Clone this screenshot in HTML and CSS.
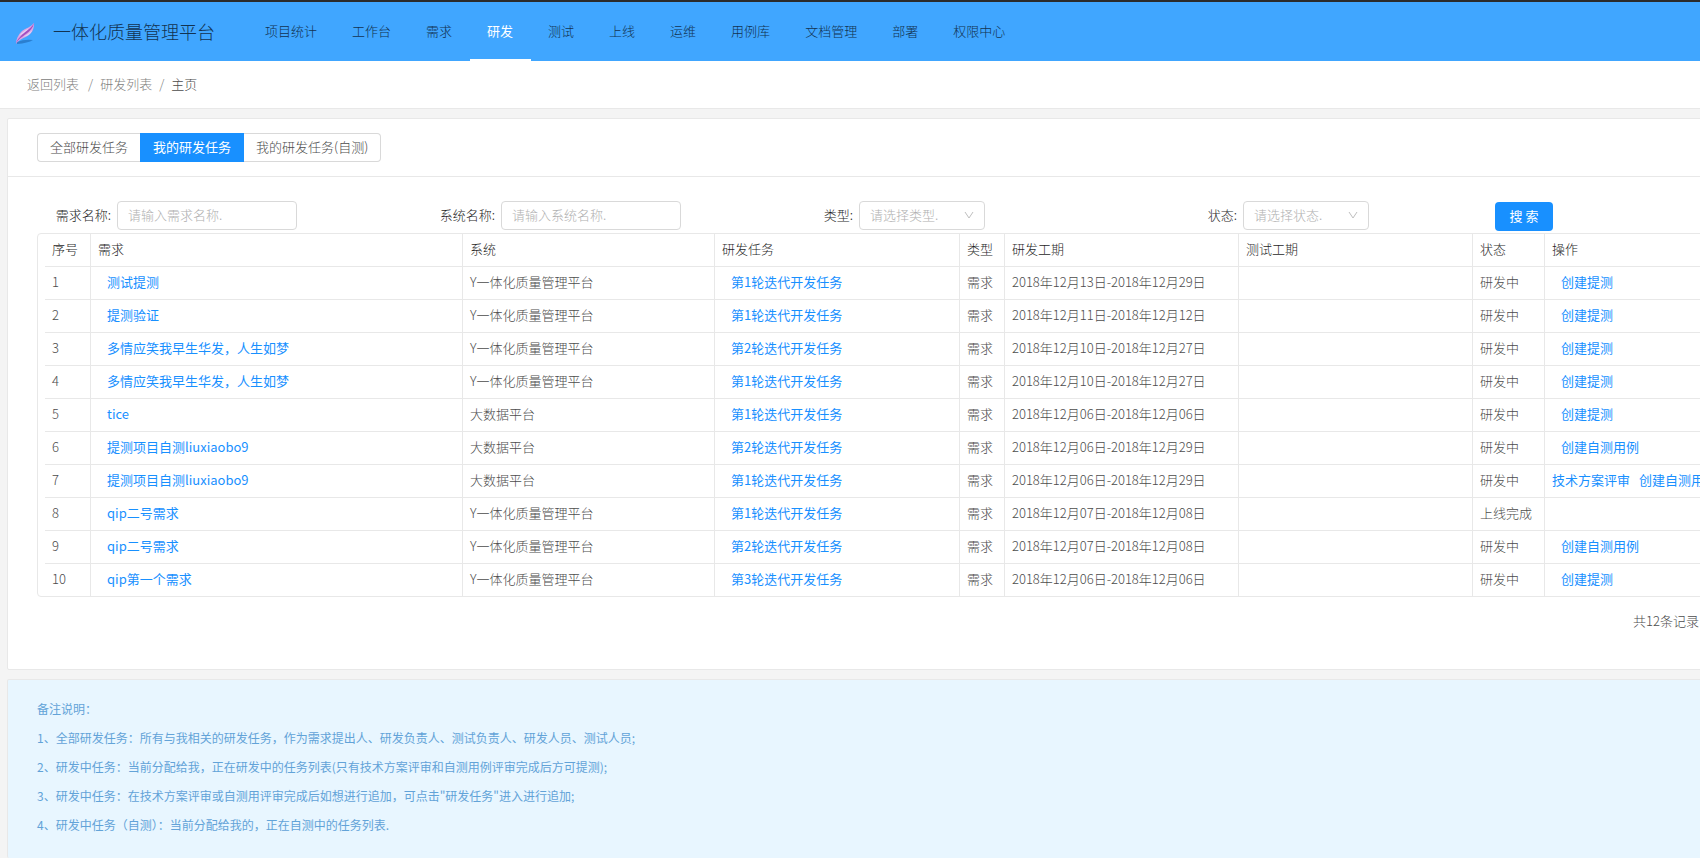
FILE: index.html
```html
<!DOCTYPE html>
<html lang="zh-CN">
<head>
<meta charset="utf-8">
<title>一体化质量管理平台</title>
<link rel="stylesheet" href="styles.css">
</head>
<body>
<header class="topbar">
  <svg class="logo" viewBox="0 0 22 24" aria-hidden="true">
    <path d="M3 20Q10 17 19 18Q14 21 3 22Z" fill="#2a7fd0"/>
    <path d="M2 22C2 17 4 13 8 9C12 6 17 5 20 1C20 6 19 10 15 13C11 16 5 17 2 22Z" fill="#d9a6e6"/>
    <path d="M2 22C3 17 7 14 11 10C15 7 18 5 20 1C19 6 16 9 12 12C8 15 4 17 2 22Z" fill="#a34fc0"/>
    <path d="M5 14C8 10 12 8 15 6C12 10 8 12 5 14ZM9 15C12 13 16 11 18 8C17 12 13 14 9 15Z" fill="#e6d3f5"/>
  </svg>
  <h1 class="brand">一体化质量管理平台</h1>
  <nav class="nav">
    <a class="nav-item" href="#">项目统计</a>
    <a class="nav-item" href="#">工作台</a>
    <a class="nav-item" href="#">需求</a>
    <a class="nav-item active" href="#">研发</a>
    <a class="nav-item" href="#">测试</a>
    <a class="nav-item" href="#">上线</a>
    <a class="nav-item" href="#">运维</a>
    <a class="nav-item" href="#">用例库</a>
    <a class="nav-item" href="#">文档管理</a>
    <a class="nav-item" href="#">部署</a>
    <a class="nav-item" href="#">权限中心</a>
  </nav>
</header>
<nav class="breadcrumb" aria-label="面包屑">
  <a href="#">返回列表</a><span class="sep first">/</span><a href="#">研发列表</a><span class="sep">/</span><span class="current">主页</span>
</nav>
<main class="page">
  <section class="card">
    <div class="card-head">
      <div class="tabs">
        <button class="tab" type="button">全部研发任务</button>
        <button class="tab active" type="button">我的研发任务</button>
        <button class="tab" type="button">我的研发任务(自测)</button>
      </div>
    </div>
    <div class="card-body">
      <form class="filters">
        <div class="field"><label class="label" for="req">需求名称:</label><input class="control" id="req" type="text" placeholder="请输入需求名称."></div>
        <div class="field"><label class="label" for="sys">系统名称:</label><input class="control" id="sys" type="text" placeholder="请输入系统名称."></div>
        <div class="field"><label class="label short" for="type">类型:</label><span class="select"><select class="control" id="type"><option>请选择类型.</option></select><svg class="chevron" viewBox="0 0 10 8" aria-hidden="true"><path d="M1 1L5 7L9 1"/></svg></span></div>
        <div class="field"><label class="label short" for="state">状态:</label><span class="select"><select class="control" id="state"><option>请选择状态.</option></select><svg class="chevron" viewBox="0 0 10 8" aria-hidden="true"><path d="M1 1L5 7L9 1"/></svg></span></div>
        <button class="search" type="button">搜 索</button>
      </form>
      <div class="table-wrap">
        <table class="table">
          <colgroup><col class="c-no"><col class="c-req"><col class="c-sys"><col class="c-task"><col class="c-type"><col class="c-date"><col class="c-date"><col class="c-state"><col></colgroup>
          <thead>
            <tr><th>序号</th><th>需求</th><th>系统</th><th>研发任务</th><th>类型</th><th>研发工期</th><th>测试工期</th><th>状态</th><th>操作</th></tr>
          </thead>
          <tbody>
            <tr><td>1</td><td><a class="link" href="#">测试提测</a></td><td>Y一体化质量管理平台</td><td><a class="link" href="#">第1轮迭代开发任务</a></td><td>需求</td><td>2018年12月13日-2018年12月29日</td><td></td><td>研发中</td><td><a class="link" href="#">创建提测</a></td></tr>
            <tr><td>2</td><td><a class="link" href="#">提测验证</a></td><td>Y一体化质量管理平台</td><td><a class="link" href="#">第1轮迭代开发任务</a></td><td>需求</td><td>2018年12月11日-2018年12月12日</td><td></td><td>研发中</td><td><a class="link" href="#">创建提测</a></td></tr>
            <tr><td>3</td><td><a class="link" href="#">多情应笑我早生华发，人生如梦</a></td><td>Y一体化质量管理平台</td><td><a class="link" href="#">第2轮迭代开发任务</a></td><td>需求</td><td>2018年12月10日-2018年12月27日</td><td></td><td>研发中</td><td><a class="link" href="#">创建提测</a></td></tr>
            <tr><td>4</td><td><a class="link" href="#">多情应笑我早生华发，人生如梦</a></td><td>Y一体化质量管理平台</td><td><a class="link" href="#">第1轮迭代开发任务</a></td><td>需求</td><td>2018年12月10日-2018年12月27日</td><td></td><td>研发中</td><td><a class="link" href="#">创建提测</a></td></tr>
            <tr><td>5</td><td><a class="link" href="#">tice</a></td><td>大数据平台</td><td><a class="link" href="#">第1轮迭代开发任务</a></td><td>需求</td><td>2018年12月06日-2018年12月06日</td><td></td><td>研发中</td><td><a class="link" href="#">创建提测</a></td></tr>
            <tr><td>6</td><td><a class="link" href="#">提测项目自测liuxiaobo9</a></td><td>大数据平台</td><td><a class="link" href="#">第2轮迭代开发任务</a></td><td>需求</td><td>2018年12月06日-2018年12月29日</td><td></td><td>研发中</td><td><a class="link" href="#">创建自测用例</a></td></tr>
            <tr><td>7</td><td><a class="link" href="#">提测项目自测liuxiaobo9</a></td><td>大数据平台</td><td><a class="link" href="#">第1轮迭代开发任务</a></td><td>需求</td><td>2018年12月06日-2018年12月29日</td><td></td><td>研发中</td><td><a class="link flush" href="#">技术方案评审</a><a class="link" href="#">创建自测用例</a></td></tr>
            <tr><td>8</td><td><a class="link" href="#">qip二号需求</a></td><td>Y一体化质量管理平台</td><td><a class="link" href="#">第1轮迭代开发任务</a></td><td>需求</td><td>2018年12月07日-2018年12月08日</td><td></td><td>上线完成</td><td></td></tr>
            <tr><td>9</td><td><a class="link" href="#">qip二号需求</a></td><td>Y一体化质量管理平台</td><td><a class="link" href="#">第2轮迭代开发任务</a></td><td>需求</td><td>2018年12月07日-2018年12月08日</td><td></td><td>研发中</td><td><a class="link" href="#">创建自测用例</a></td></tr>
            <tr><td>10</td><td><a class="link" href="#">qip第一个需求</a></td><td>Y一体化质量管理平台</td><td><a class="link" href="#">第3轮迭代开发任务</a></td><td>需求</td><td>2018年12月06日-2018年12月06日</td><td></td><td>研发中</td><td><a class="link" href="#">创建提测</a></td></tr>
          </tbody>
        </table>
      </div>
      <div class="pager">共12条记录</div>
    </div>
  </section>
  <section class="card notes">
    <p>备注说明：</p>
    <p>1、全部研发任务：所有与我相关的研发任务，作为需求提出人、研发负责人、测试负责人、研发人员、测试人员;</p>
    <p>2、研发中任务：当前分配给我，正在研发中的任务列表(只有技术方案评审和自测用例评审完成后方可提测);</p>
    <p>3、研发中任务：在技术方案评审或自测用评审完成后如想进行追加，可点击"研发任务"进入进行追加;</p>
    <p>4、研发中任务（自测）：当前分配给我的，正在自测中的任务列表.</p>
  </section>
</main>
</body>
</html>
```
FILE: styles.css
```css
* { box-sizing: border-box; }

body {
  margin: 0;
  min-height: 100vh;
  display: flex;
  flex-direction: column;
  overflow-x: hidden;
  background: #f4f4f4;
  color: #4c4c4c;
  font-family: "Noto Sans CJK SC", sans-serif;
  font-size: 13px;
  font-weight: 300;
  line-height: 20px;
}

a { color: inherit; text-decoration: none; }

button, input, select { font: inherit; }

.topbar {
  display: flex;
  align-items: stretch;
  height: 61px;
  padding-left: 14px;
  border-top: 2px solid #2b2b2b;
  background: #40a6ff;
  color: #123352;
}

.logo { width: 22px; height: 24px; margin-top: 20px; }

.brand {
  width: 195px;
  margin: 0 0 0 17px;
  font-size: 18px;
  font-weight: 300;
  line-height: 58px;
  white-space: nowrap;
}

.nav { display: flex; }

.nav-item {
  padding: 0 18px 0 17px;
  border-bottom: 2px solid transparent;
  line-height: 57px;
  white-space: nowrap;
}

.nav-item.active { border-color: #fff; color: #fff; font-weight: 400; }

.breadcrumb {
  display: flex;
  align-items: center;
  height: 48px;
  padding: 0 27px 2px;
  border-bottom: 1px solid #e8e8e8;
  background: #fff;
  color: #808080;
}

.sep { margin: 0 7px; }
.sep.first { margin-left: 9px; }
.current { color: #4c4c4c; }

.page {
  flex: 1;
  display: flex;
  flex-direction: column;
  gap: 9px;
  width: 112%;
  padding: 9px 7px 0;
}

.card {
  border: 1px solid #e8e8e8;
  border-radius: 2px;
  background: #fff;
}

.card-head {
  padding: 14px 29px;
  border-bottom: 1px solid #e8e8e8;
}

.tabs { display: flex; }

.tab {
  height: 29px;
  padding: 0 12px 2px;
  border: 1px solid #d9d9d9;
  border-width: 1px 0;
  background: #fff;
  color: #4c4c4c;
}

.tab:first-child { border-left-width: 1px; border-radius: 4px 0 0 4px; }
.tab:last-child { border-right-width: 1px; border-radius: 0 4px 4px 0; }

.tab.active {
  padding: 0 13px 2px;
  border-color: #1890ff;
  background: #1890ff;
  color: #fff;
  font-weight: 400;
}

.card-body { padding: 24px 29px 36px; }

.filters {
  display: grid;
  grid-template-columns: 384fr 384fr 384fr 306fr 372fr;
  align-items: start;
}

.field { display: flex; align-items: center; height: 32px; padding-bottom: 3px; }

.label {
  width: 80px;
  padding: 0 6px 2px 0;
  color: #1f1f1f;
  text-align: right;
  white-space: nowrap;
}

.label.short { width: 54px; }

.control {
  width: 180px;
  height: 29px;
  padding: 0 10px 2px;
  border: 1px solid #d9d9d9;
  border-radius: 4px;
  background: #fff;
  color: #b0b0b0;
}

.control::placeholder { color: #b0b0b0; opacity: 1; }

.select { position: relative; }
.select .control { width: 126px; appearance: none; }

.chevron {
  position: absolute;
  top: 10px;
  right: 11px;
  width: 10px;
  height: 8px;
  fill: none;
  stroke: #bfbfbf;
  pointer-events: none;
}

.search {
  width: 58px;
  height: 29px;
  margin-top: 1px;
  padding: 0 0 2px;
  border: 0;
  border-radius: 4px;
  background: #1890ff;
  color: #fff;
  font-weight: 400;
}

.table-wrap {
  padding-left: 7px;
  border: 1px solid #e8e8e8;
  border-radius: 4px;
}

.table {
  width: 100%;
  border-collapse: separate;
  border-spacing: 0;
  table-layout: fixed;
}

.c-no { width: 46px; }
.c-req { width: 372px; }
.c-sys { width: 252px; }
.c-task { width: 245px; }
.c-type { width: 45px; }
.c-date { width: 234px; }
.c-state { width: 72px; }

.table th,
.table td {
  height: 33px;
  padding: 0 7px 2px;
  border-right: 1px solid #e8e8e8;
  border-bottom: 1px solid #e8e8e8;
  text-align: left;
  white-space: nowrap;
}

.table th { color: #1f1f1f; font-weight: 300; }
.table tr > :last-child { border-right: 0; }
.table tbody tr:last-child td { height: 32px; border-bottom: 0; }

.link { margin-left: 9px; color: #1890ff; font-weight: 400; }
.link.flush { margin-left: 0; }

.pager {
  padding: 14px 168px 2px 0;
  text-align: right;
}

.notes {
  flex: 1;
  padding: 14px 29px;
  border-bottom: 0;
  background: #e8f6ff;
  color: #62a3d8;
  font-size: 12px;
  font-weight: 400;
  line-height: 29px;
}

.notes p { margin: 0; }
```
